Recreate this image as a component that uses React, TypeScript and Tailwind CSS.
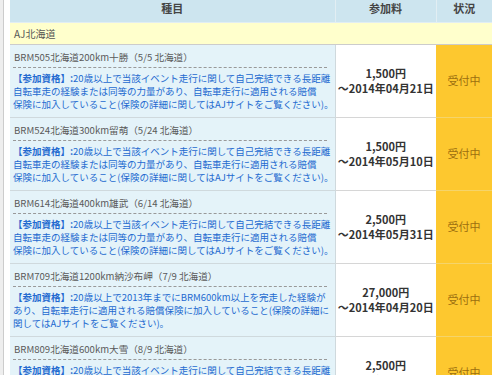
import React from 'react';

interface Entry {
  title: string;
  first: string;
  rest: string[];
  fee: string;
  until: string;
}

const standard = ['自転車走の経験または同等の力量があり、自転車走行に適用される賠償', '保険に加入していること(保険の詳細に関してはAJサイトをご覧ください)。'];

const entries: Entry[] = [
  {
    title: 'BRM505北海道200km十勝（5/5 北海道）',
    first: '20歳以上で当該イベント走行に関して自己完結できる長距離',
    rest: standard,
    fee: '1,500円',
    until: '～2014年04月21日',
  },
  {
    title: 'BRM524北海道300km留萌（5/24 北海道）',
    first: '20歳以上で当該イベント走行に関して自己完結できる長距離',
    rest: standard,
    fee: '1,500円',
    until: '～2014年05月10日',
  },
  {
    title: 'BRM614北海道400km雄武（6/14 北海道）',
    first: '20歳以上で当該イベント走行に関して自己完結できる長距離',
    rest: standard,
    fee: '2,500円',
    until: '～2014年05月31日',
  },
  {
    title: 'BRM709北海道1200km納沙布岬（7/9 北海道）',
    first: '20歳以上で2013年までにBRM600km以上を完走した経験が',
    rest: ['あり、自転車走行に適用される賠償保険に加入していること(保険の詳細に', '関してはAJサイトをご覧ください)。'],
    fee: '27,000円',
    until: '～2014年04月20日',
  },
  {
    title: 'BRM809北海道600km大雪（8/9 北海道）',
    first: '20歳以上で当該イベント走行に関して自己完結できる長距離',
    rest: standard,
    fee: '2,500円',
    until: '～2014年05月20日',
  },
];

const font = { fontFamily: '"Noto Sans CJK JP", "Noto Sans", sans-serif' };

export default function App() {
  return (
    <div className="flex h-[375px] w-[500px] overflow-hidden bg-white" style={font}>
      <div className="w-[4px] shrink-0 border-r border-[#cccccc] bg-[#eeeeee]" />
      <div className="w-[6px] shrink-0" />
      <table className="w-[482px] shrink-0 table-fixed border-collapse self-start">
        <colgroup>
          <col className="w-[325px]" />
          <col className="w-[101px]" />
          <col className="w-[56px]" />
        </colgroup>
        <thead>
          <tr className="h-[22px] bg-[#cde5ef] text-[11px] font-bold text-[#444]">
            <th className="border-b border-r border-[#e2eef3] pb-[7px] pt-[2px] align-top leading-[12px]">種目</th>
            <th className="border-b border-r border-[#e2eef3] pb-[7px] pt-[2px] align-top leading-[12px]">参加料</th>
            <th className="border-b border-[#e2eef3] pb-[7px] pt-[2px] align-top leading-[12px]">状況</th>
          </tr>
        </thead>
        <tbody>
          <tr className="h-[22px] bg-[#ffffcc]">
            <td colSpan={3} className="border-b border-[#cccccc] pl-[4px] text-[10px] leading-[21px] text-[#555]">
              AJ北海道
            </td>
          </tr>
          {entries.map((e) => (
            <tr key={e.title}>
              <td className="border-b border-r border-[#cfd9dd] bg-[#e4f3f9] p-0 pl-[3px] pr-[1px] align-top">
                <div className="mr-[7px] overflow-hidden whitespace-nowrap border-b border-dashed border-[#999] pb-[3px] pl-[1px] pt-[5px] text-[9.6px] leading-[14px] text-[#5a5a5a]">
                  {e.title}
                </div>
                <div className="mt-[4px] overflow-hidden whitespace-nowrap pb-[6px] text-[9.5px] leading-[13px] text-[#236ad0]">
                  <div>
                    <span className="font-bold">【参加資格】:</span>
                    {e.first}
                  </div>
                  {e.rest.map((l) => (
                    <div key={l}>{l}</div>
                  ))}
                </div>
              </td>
              <td className="border-b border-[#d6d6d6] bg-white text-center align-middle text-[11px] font-bold leading-[15px] text-[#333]">
                <div>{e.fee}</div>
                <div>{e.until}</div>
              </td>
              <td className="border-b border-[#f5d46a] bg-[#fdc82f] text-center align-middle text-[11px] text-[#9c6f10]">
                受付中
              </td>
            </tr>
          ))}
        </tbody>
      </table>
    </div>
  );
}
